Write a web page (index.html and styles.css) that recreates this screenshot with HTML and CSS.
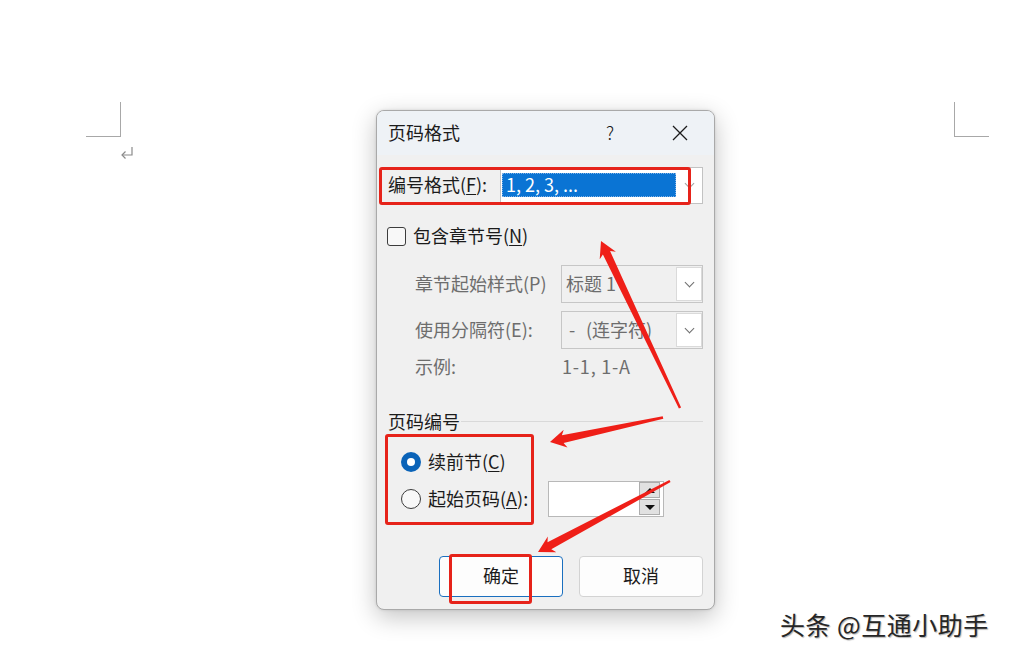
FILE: index.html
```html
<!DOCTYPE html>
<html lang="zh-CN">
<head>
<meta charset="utf-8">
<title>页码格式</title>
<link rel="stylesheet" href="styles.css">
</head>
<body>
  <!-- document page with crop marks -->
  <div class="doc">
    <div class="crop-group">
      <div class="crop crop-left"></div>
      <svg class="para-mark" width="14" height="13" viewBox="0 0 14 13">
        <path d="M12 1 V9 H2" fill="none" stroke="#8a8a8a" stroke-width="1.2"/>
        <path d="M5.5 5.5 L2 9 L5.5 12.5" fill="none" stroke="#8a8a8a" stroke-width="1.2"/>
      </svg>
    </div>
    <div class="crop crop-right"></div>
  </div>

  <!-- page number format dialog -->
  <div class="dialog">
    <div class="titlebar">
      <span class="title">页码格式</span>
      <span class="help">?</span>
      <span class="close">
        <svg width="16" height="16" viewBox="0 0 16 16">
          <path d="M1 1 L15 15 M15 1 L1 15" stroke="#1b1b1b" stroke-width="1.3" fill="none"/>
        </svg>
      </span>
    </div>

    <div class="body">
      <div class="row row-format">
        <span class="text label-format">编号格式(<u>F</u>):</span>
        <div class="select">
          <span class="select-value">1, 2, 3, ...</span>
          <span class="select-drop"><span class="chev chev-light"></span></span>
        </div>
      </div>

      <div class="row row-check">
        <span class="checkbox"></span>
        <span class="text check-label">包含章节号(<u>N</u>)</span>
      </div>

      <div class="row row-combo">
        <span class="text label-sub">章节起始样式(P)</span>
        <div class="combo">
          <span class="text combo-value">标题 1</span>
          <span class="combo-drop"><span class="chev"></span></span>
        </div>
      </div>

      <div class="row row-combo row-combo2">
        <span class="text label-sub">使用分隔符(E):</span>
        <div class="combo">
          <span class="text combo-value"><span class="dash">-</span>(连字符)</span>
          <span class="combo-drop"><span class="chev"></span></span>
        </div>
      </div>

      <div class="row row-example">
        <span class="text label-sub">示例:</span>
        <span class="text example-value">1-1, 1-A</span>
      </div>

      <div class="row row-section">
        <span class="text section-title">页码编号</span>
        <span class="section-line"></span>
      </div>

      <div class="row row-radio1">
        <span class="radio radio-on"></span>
        <span class="text radio-label">续前节(<u>C</u>)</span>
      </div>

      <div class="row row-radio2">
        <span class="radio"></span>
        <span class="text radio-label radio-label-fixed">起始页码(<u>A</u>):</span>
        <div class="spin">
          <div class="spin-btns">
            <span class="spin-btn"><span class="tri-up"></span></span>
            <span class="spin-btn"><span class="tri-down"></span></span>
          </div>
        </div>
      </div>

      <div class="row row-buttons">
        <button class="btn btn-default"><span class="text">确定</span></button>
        <button class="btn"><span class="text">取消</span></button>
      </div>
    </div>
  </div>

  <!-- red annotation marks drawn over the dialog -->
  <svg class="annotations" width="1011" height="657" viewBox="0 0 1011 657">
    <g fill="none" stroke="#e6231a" stroke-width="3">
      <rect x="380.5" y="168.5" width="309" height="35" rx="1.5"/>
      <rect x="386.5" y="435.5" width="146" height="88" rx="1.5"/>
      <rect x="450.5" y="555.5" width="80" height="47" rx="1.5"/>
    </g>
    <g fill="#ef1f18">
      <polygon points="601,241 615.9,251.7 610.1,251.1 681.1,407.5 678.9,408.5 602.9,254.5 599.7,259.3"/>
      <polygon points="550,442 563.7,429.8 561.9,435.3 662.7,416.3 663.3,418.7 563.6,443.1 567.5,447.4"/>
      <polygon points="538,552 547.8,536.5 547.5,542.3 669.4,479.9 670.6,482.1 551.3,549.3 556.4,552.3"/>
    </g>
  </svg>

  <div class="watermark">头条 @互通小助手</div>
</body>
</html>
```

FILE: styles.css
```css
* {
  box-sizing: border-box;
}

html,
body {
  margin: 0;
  padding: 0;
}

body {
  position: relative;
  width: 1011px;
  height: 657px;
  overflow: hidden;
  background: #ffffff;
  color: #1b1b1b;
  font-family: "Noto Sans CJK SC", "Noto Sans", sans-serif;
}

/* ---------- document page ---------- */
.doc {
  display: flex;
  justify-content: space-between;
  align-items: flex-start;
  padding: 102px 22px 0 86px;
}

.crop-group {
  display: flex;
  flex-direction: column;
}

.crop {
  width: 35px;
  height: 35px;
  border-bottom: 1px solid #a8a8a8;
}

.crop-left {
  border-right: 1px solid #a8a8a8;
}

.crop-right {
  border-left: 1px solid #a8a8a8;
}

.para-mark {
  display: block;
  margin: 9px 0 0 34px;
}

/* ---------- dialog ---------- */
.dialog {
  position: absolute;
  left: 376px;
  top: 110px;
  width: 339px;
  height: 500px;
  display: flex;
  flex-direction: column;
  background: #f0f0f0;
  border: 1px solid #a9a9a9;
  border-radius: 8px;
  box-shadow: 0 7px 24px rgba(0, 0, 0, 0.24), 0 0 3px rgba(0, 0, 0, 0.12);
  font-size: 18px;
  line-height: 24px;
}

/* CJK glyphs sit a little low in the line box; lift the text slightly */
.text {
  padding-bottom: 3px;
}

.titlebar {
  flex: none;
  height: 44px;
  display: flex;
  align-items: center;
  padding: 0 11px;
  background: #eef2f6;
  border-radius: 7px 7px 0 0;
}

.title {
  flex: 1;
  margin-top: -2px;
}

.help {
  width: 46px;
  margin-top: -2px;
  text-align: center;
  font-weight: 300;
}

.close {
  width: 46px;
  margin-left: 24px;
  display: flex;
  justify-content: center;
}

.body {
  display: flex;
  flex-direction: column;
  padding: 0 11px;
}

.row {
  display: flex;
  align-items: center;
  flex: none;
}

u {
  text-decoration-thickness: 1px;
  text-underline-offset: 2px;
}

/* number format */
.row-format {
  height: 37px;
  margin-top: 12px;
}

.label-format {
  width: 112px;
}

.select {
  width: 203px;
  height: 37px;
  display: flex;
  background: #ffffff;
  border: 1px solid #c2c2c2;
}

.select-value {
  width: 174px;
  height: 24px;
  margin: 5px 0 0 1px;
  padding-left: 4px;
  line-height: 22px;
  background: #0a74d4;
  color: #ffffff;
  outline: 1px dotted #7fb2e6;
  outline-offset: -1px;
  white-space: nowrap;
}

.select-drop {
  flex: 1;
  display: flex;
  align-items: center;
  justify-content: center;
}

.chev {
  width: 7px;
  height: 7px;
  border-right: 1px solid #6e6e6e;
  border-bottom: 1px solid #6e6e6e;
  transform: translateY(-2px) rotate(45deg);
}

.chev-light {
  border-color: #a0a0a0;
}

/* chapter number */
.row-check {
  height: 24px;
  margin-top: 20px;
}

.checkbox {
  width: 19px;
  height: 19px;
  margin-left: -1px;
  border: 1px solid #3c3c3c;
  border-radius: 3px;
  background: #f8f8f8;
}

.check-label {
  margin-left: 7px;
}

.row-combo {
  height: 38px;
  margin-top: 17px;
}

.row-combo2 {
  margin-top: 8px;
}

.label-sub {
  width: 173px;
  padding-left: 27px;
  color: #6d6d6d;
  white-space: nowrap;
}

.combo {
  width: 142px;
  height: 38px;
  display: flex;
  align-items: center;
  background: #f0f0f0;
  border: 1px solid #c6c6c6;
  color: #6d6d6d;
}

.combo-value {
  flex: 1;
  padding-left: 4px;
  white-space: nowrap;
}

.dash {
  display: inline-block;
  width: 20px;
  padding-left: 3px;
}

.combo-drop {
  width: 26px;
  height: 34px;
  display: flex;
  align-items: center;
  justify-content: center;
  background: #ffffff;
  border: 1px solid #dadada;
}

.row-example {
  height: 24px;
  margin-top: 6px;
}

.example-value {
  padding-left: 1px;
  letter-spacing: 0.8px;
  color: #6d6d6d;
}

/* page numbering */
.row-section {
  height: 24px;
  margin-top: 31px;
}

.section-line {
  flex: 1;
  height: 1px;
  margin: -1px 0 0 1px;
  background: #d9d9d9;
}

.row-radio1 {
  height: 24px;
  margin-top: 16px;
  padding-left: 13px;
}

.row-radio2 {
  height: 36px;
  margin-top: 7px;
  padding-left: 13px;
}

.radio {
  width: 20px;
  height: 20px;
  border-radius: 50%;
  border: 1px solid #3c3c3c;
  background: #f8f8f8;
}

.radio-on {
  border: none;
  background: #0a63b8;
  display: flex;
  align-items: center;
  justify-content: center;
}

.radio-on::after {
  content: "";
  width: 8px;
  height: 8px;
  border-radius: 50%;
  background: #ffffff;
}

.radio-label {
  margin-left: 7px;
}

.radio-label-fixed {
  width: 120px;
  white-space: nowrap;
}

.spin {
  width: 116px;
  height: 36px;
  display: flex;
  justify-content: flex-end;
  background: #ffffff;
  border: 1px solid #b8b8b8;
}

.spin-btns {
  width: 21px;
  margin-right: 3px;
  display: flex;
  flex-direction: column;
  gap: 1px;
}

.spin-btn {
  height: 16px;
  display: flex;
  align-items: center;
  justify-content: center;
  background: #e1e1e1;
  border: 1px solid #adadad;
}

.tri-up {
  width: 0;
  height: 0;
  border-left: 5px solid transparent;
  border-right: 5px solid transparent;
  border-bottom: 5px solid #111111;
}

.tri-down {
  width: 0;
  height: 0;
  border-left: 5px solid transparent;
  border-right: 5px solid transparent;
  border-top: 5px solid #111111;
}

/* buttons */
.row-buttons {
  height: 41px;
  margin-top: 39px;
  justify-content: flex-end;
  gap: 16px;
}

.btn {
  width: 124px;
  height: 41px;
  padding: 0;
  font-family: inherit;
  font-size: 18px;
  line-height: 24px;
  color: #1b1b1b;
  background: #fdfdfd;
  border: 1px solid #d3d3d3;
  border-radius: 4px;
}

.btn .text {
  display: inline-block;
}

.btn-default {
  border-color: #1a6fbf;
}

/* ---------- overlays ---------- */
.annotations {
  position: absolute;
  left: 0;
  top: 0;
  pointer-events: none;
}

.watermark {
  position: absolute;
  left: 780px;
  top: 609px;
  font-size: 25px;
  line-height: 30px;
  letter-spacing: 0.5px;
  color: #262626;
  text-shadow: 1px 1px 1px rgba(0, 0, 0, 0.3);
  white-space: nowrap;
}
```
